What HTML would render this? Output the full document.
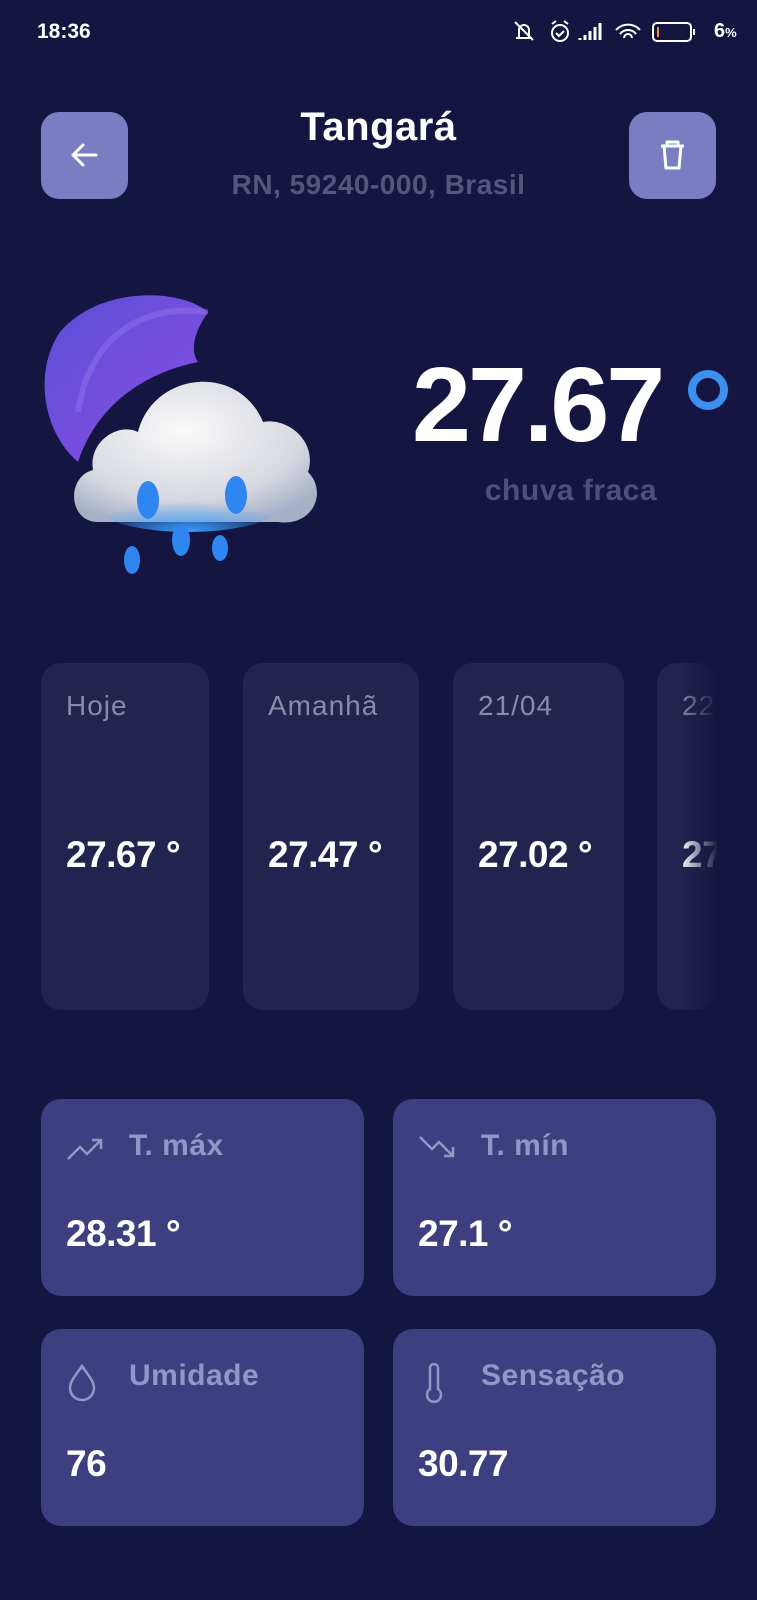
<!DOCTYPE html>
<html><head><meta charset="utf-8"><style>
*{margin:0;padding:0;box-sizing:border-box}
body{width:757px;height:1600px;background:#141540;font-family:"Liberation Sans",sans-serif;position:relative;overflow:hidden;color:#fff}
.a{position:absolute}
.btn{position:absolute;width:87px;height:87px;border-radius:18px;background:#7a7dc2;top:112px}
.day{position:absolute;top:663px;height:347px;border-radius:20px;background:#22234e}
.day .l{position:absolute;left:25px;top:27px;font-size:28px;color:#8a8aab;letter-spacing:1px}
.day .v{position:absolute;left:25px;top:171px;font-size:37px;font-weight:bold;letter-spacing:-0.5px}
.st{position:absolute;width:323px;height:197px;border-radius:20px;background:#3e3f80}
.st .l{position:absolute;left:88px;top:30px;font-size:30px;font-weight:bold;color:#9496c8;letter-spacing:0.5px}
.st .v{position:absolute;left:25px;top:114px;font-size:37px;font-weight:bold;letter-spacing:-0.5px}
.st svg{position:absolute;left:25px;top:34px}
</style></head><body>
<div class="a" style="left:37px;top:20px;font-size:21px;font-weight:bold">18:36</div>
<div class="a" style="left:512px;top:18px;font-size:20px;font-weight:bold;letter-spacing:2px">
<svg width="190" height="28" viewBox="0 0 190 28" fill="none" stroke="#fff" stroke-width="2">
<path d="M4 20h16M7 20v-8a5 5 0 0 1 10 0v8M3 4l18 18"/>
<circle cx="48" cy="15" r="8"/><path d="M44 15l3 3 5-5M40 6l4-3M56 6l-4-3"/>
<path d="M68 22v-2M73 22v-5M78 22v-9M83 22v-13M88 22v-17" stroke-width="3"/>
<path d="M104 12a16 16 0 0 1 24 0M108 16a10 10 0 0 1 16 0M112 20a4 4 0 0 1 8 0"/>
<rect x="141" y="5" width="38" height="18" rx="4"/><rect x="145" y="9" width="2" height="10" fill="#f28a2e" stroke="none"/><path d="M182 11v6"/>
</svg></div>
<div class="a" style="left:714px;top:20px;font-size:20px;font-weight:bold">6<span style="font-size:13px">%</span></div>

<div class="btn" style="left:41px"><svg width="87" height="87"><path d="M55 43H32M42 33L32 43l10 10" stroke="#fff" stroke-width="3" fill="none" stroke-linecap="round" stroke-linejoin="round"/></svg></div>
<div class="btn" style="left:629px"><svg width="87" height="87"><path d="M32 34h23M38 34v-4h11v4M35 34l2 22h13l2-22" stroke="#fff" stroke-width="3" fill="none" stroke-linejoin="round"/></svg></div>
<div class="a" style="left:0;width:757px;text-align:center;top:105px;font-size:40px;font-weight:bold;letter-spacing:0.5px">Tangará</div>
<div class="a" style="left:0;width:757px;text-align:center;top:169px;font-size:28px;font-weight:bold;color:#55567f;letter-spacing:0.5px">RN, 59240-000, Brasil</div>

<svg class="a" style="left:38px;top:292px" width="290" height="300" viewBox="0 0 290 300">
<defs>
<linearGradient id="m" x1="0" y1="0" x2="1" y2="1"><stop offset="0" stop-color="#5a4fd8"/><stop offset="1" stop-color="#8a4ee0"/></linearGradient>
<radialGradient id="c" cx=".45" cy=".35" r=".7"><stop offset="0" stop-color="#fafafa"/><stop offset=".7" stop-color="#d6d8e0"/><stop offset="1" stop-color="#a8b0c8"/></radialGradient>
<radialGradient id="b" cx=".5" cy="1" r=".6"><stop offset="0" stop-color="#3aa0ff"/><stop offset="1" stop-color="#3aa0ff" stop-opacity="0"/></radialGradient>
</defs>
<path d="M170 20C140 -5 60 -5 22 40C-5 80 5 140 40 170C60 110 110 80 160 70C150 55 160 35 170 20Z" fill="url(#m)"/>
<path d="M170 20C100 10 50 50 40 120" stroke="#9a7cf0" stroke-width="6" fill="none" opacity=".4"/>
<path d="M60 230C30 230 28 185 55 178C50 150 80 130 100 140C115 80 200 70 225 130C250 125 280 150 270 180C290 200 275 235 240 230Z" fill="url(#c)"/>
<ellipse cx="150" cy="215" rx="90" ry="25" fill="url(#b)"/>
<g fill="#2f86f0"><ellipse cx="110" cy="208" rx="11" ry="19"/><ellipse cx="198" cy="203" rx="11" ry="19"/><ellipse cx="143" cy="248" rx="9" ry="16"/><ellipse cx="182" cy="256" rx="8" ry="13"/><ellipse cx="94" cy="268" rx="8" ry="14"/></g>
</svg>

<div class="a" style="left:412px;top:345px;font-size:106px;font-weight:bold;letter-spacing:-3px">27.67</div>
<div class="a" style="left:688px;top:370px;width:40px;height:40px;border:8px solid #3d8ff0;border-radius:50%"></div>
<div class="a" style="left:440px;top:474px;width:262px;text-align:center;font-size:30px;font-weight:bold;color:#4d4f80;letter-spacing:0.5px">chuva fraca</div>

<div class="day" style="left:41px;width:168px"><div class="l">Hoje</div><div class="v">27.67 °</div></div>
<div class="day" style="left:243px;width:176px"><div class="l">Amanhã</div><div class="v">27.47 °</div></div>
<div class="day" style="left:453px;width:171px"><div class="l">21/04</div><div class="v">27.02 °</div></div>
<div class="day" style="left:657px;width:60px;overflow:hidden"><div class="l">22</div><div class="v">27</div></div>
<div class="a" style="left:680px;top:660px;width:77px;height:355px;background:linear-gradient(to right,rgba(20,21,64,0),#141540 50%)"></div>

<div class="st" style="left:41px;top:1099px"><svg width="40" height="30" fill="none" stroke="#9496c8" stroke-width="2.5"><path d="M2 26l12-12 7 7 14-14M26 7h9v9"/></svg><div class="l">T. máx</div><div class="v">28.31 °</div></div>
<div class="st" style="left:393px;top:1099px"><svg width="40" height="30" fill="none" stroke="#9496c8" stroke-width="2.5"><path d="M2 4l12 12 7-7 14 14M26 23h9v-9"/></svg><div class="l">T. mín</div><div class="v">27.1 °</div></div>
<div class="st" style="left:41px;top:1329px"><svg width="40" height="40" fill="none" stroke="#9496c8" stroke-width="2.5"><path d="M16 3C10 12 4 18 4 25a12 12 0 0 0 24 0C28 18 22 12 16 3Z"/></svg><div class="l">Umidade</div><div class="v">76</div></div>
<div class="st" style="left:393px;top:1329px"><svg width="40" height="40" fill="none" stroke="#9496c8" stroke-width="2.5"><path d="M12 26V5a4 4 0 0 1 8 0v21a7 7 0 1 1-8 0Z"/></svg><div class="l">Sensação</div><div class="v">30.77</div></div>
</body></html>
